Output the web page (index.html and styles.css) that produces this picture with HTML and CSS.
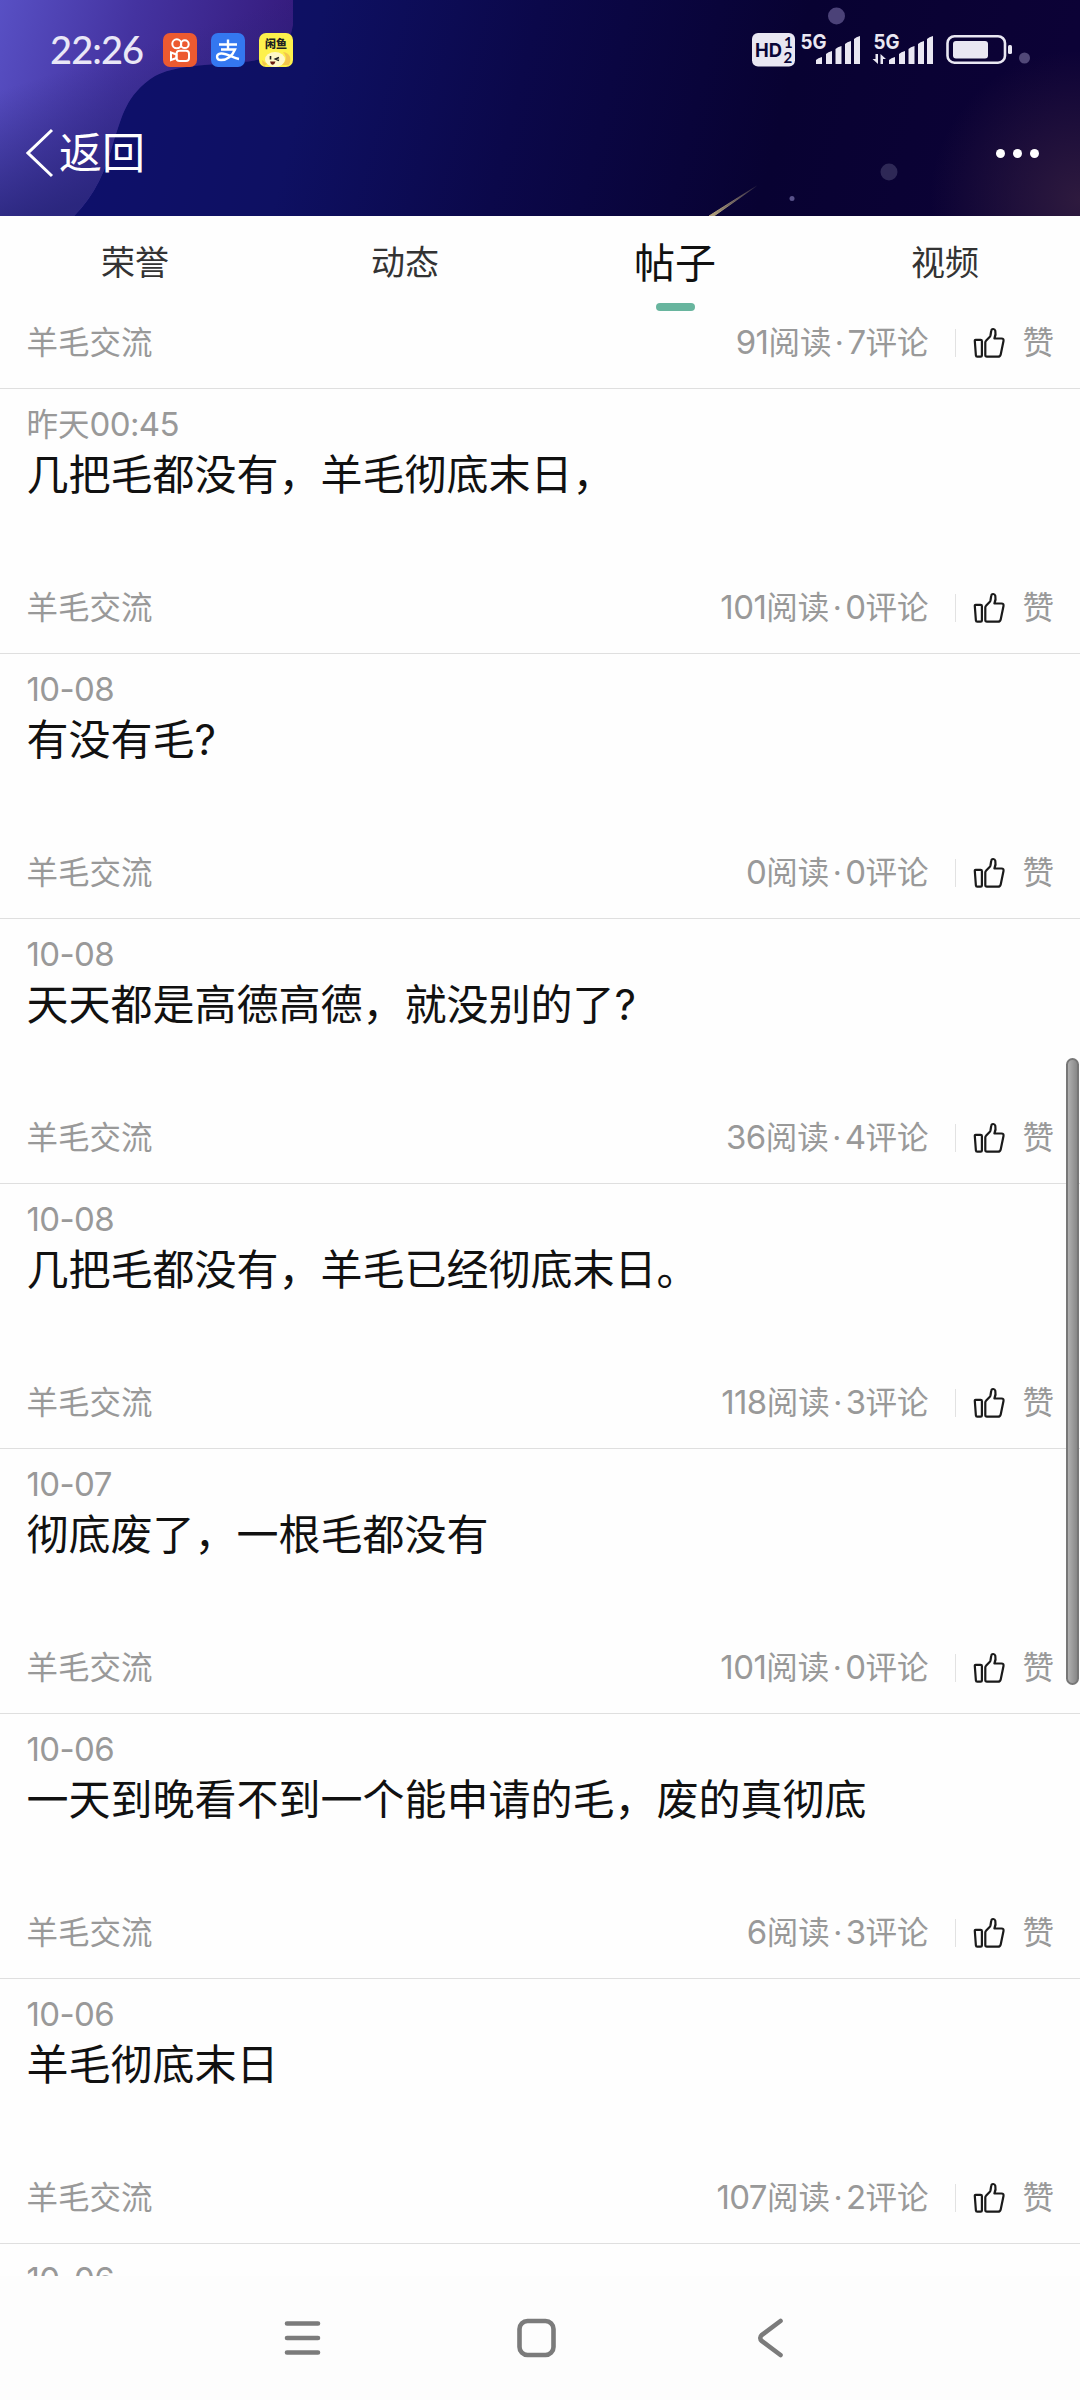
FILE: index.html
```html
<!DOCTYPE html>
<html lang="zh-CN">
<head>
<meta charset="utf-8">
<title>帖子</title>
<link rel="stylesheet" href="styles.css">
</head>
<body>
<svg class="defs" aria-hidden="true">
  <symbol id="thumb" viewBox="0 0 32 32">
    <path d="M2.200 12.800H7.600Q8.900 12.800 8.900 14V28.500Q8.900 29.700 7.700 29.700H4.200Q3 29.700 2.900 28.500L1.800 13.800Q1.700 12.800 2.700 12.800M12.300 28V15.500Q12.300 14.500 13 13.800L16.600 10Q17.300 9.200 17.500 8.200L18.200 4C18.500 1.500 21.600 1.300 22.300 3.800C22.900 6.300 22.500 9 21.400 11.500H28.500Q31 11.500 30.500 14L27.700 27.500Q27.200 29.700 25 29.700H14Q12.300 29.700 12.300 28Z"/>
  </symbol>
</svg>
<div class="screen">
  <header class="hero">
    <svg class="hero-art" viewBox="0 0 1080 216" preserveAspectRatio="none">
      <defs>
        <linearGradient id="night" x1="0" y1="0" x2="1" y2=".05">
          <stop offset="0" stop-color="#0e1070"/><stop offset=".3" stop-color="#0e1062"/>
          <stop offset=".5" stop-color="#0b084a"/><stop offset=".75" stop-color="#080232"/><stop offset="1" stop-color="#0c0236"/>
        </linearGradient>
        <linearGradient id="wave" x1="0" y1="0" x2="290" y2="70" gradientUnits="userSpaceOnUse">
          <stop offset="0" stop-color="#5850c4"/><stop offset=".45" stop-color="#4433a0"/><stop offset="1" stop-color="#351a7c"/>
        </linearGradient>
        <linearGradient id="waveShade" x1="0" y1="90" x2="40" y2="216" gradientUnits="userSpaceOnUse">
          <stop offset="0" stop-color="#28257a" stop-opacity="0"/><stop offset="1" stop-color="#28257a" stop-opacity=".9"/>
        </linearGradient>
        <radialGradient id="glow" cx="1080" cy="200" r="150" gradientUnits="userSpaceOnUse">
          <stop offset="0" stop-color="#2e1a3e"/><stop offset="1" stop-color="#2e1a3e" stop-opacity="0"/>
        </radialGradient>
        <linearGradient id="meteor" x1="710" y1="216" x2="758" y2="186" gradientUnits="userSpaceOnUse">
          <stop offset="0" stop-color="#b6a57e"/><stop offset="1" stop-color="#b6a57e" stop-opacity="0"/>
        </linearGradient>
      </defs>
      <rect width="1080" height="216" fill="url(#night)"/>
      <rect width="1080" height="216" fill="url(#glow)"/>
      <path d="M0 0H293V25Q288 60 240 62C195 66 175 66 155 76C125 95 122 118 114 140C106 170 95 195 74 216H0Z" fill="url(#wave)"/>
      <path d="M0 0H293V25Q288 60 240 62C195 66 175 66 155 76C125 95 122 118 114 140C106 170 95 195 74 216H0Z" fill="url(#waveShade)"/>
      <circle cx="836.500" cy="16" r="8.500" fill="#4b4278"/>
      <circle cx="889" cy="172" r="8.500" fill="#2e2856"/>
      <circle cx="1024.500" cy="58" r="5.500" fill="#514878"/>
      <circle cx="792" cy="198.500" r="2.500" fill="#59528a"/>
      <path d="M709 216L758 185L714 216Z" fill="url(#meteor)" stroke="url(#meteor)"/>
    </svg>
    <div class="status">
      <span class="clock">22:26</span>
      <svg class="app" viewBox="0 0 34 34"><rect width="34" height="34" rx="7" fill="#ec5a30"/><g fill="none" stroke="#fff" stroke-width="2"><circle cx="13.800" cy="10.800" r="4.500"/><circle cx="21.800" cy="11.200" r="3.900"/><rect x="13.500" y="17.800" width="12.500" height="10.200" rx="3"/><path d="M13.500 21.500L8 19.500v7.500l5.500-2z"/></g></svg>
      <svg class="app" viewBox="0 0 34 34"><rect width="34" height="34" rx="7" fill="#3477f0"/><path d="M8 11.500h18M17 6.500v10M10 16.500h14c-3 7-8 10.500-14 10.500-5 0-5.500-6 0-6.500 6-.5 12 4.500 18 5.500" fill="none" stroke="#fff" stroke-width="2.400"/></svg>
      <svg class="app" viewBox="0 0 34 34"><rect width="34" height="34" rx="7" fill="#fdf04c"/><ellipse cx="16" cy="26.500" rx="10" ry="7.500" fill="#fff8c8"/><path d="M24 19c7 1 9 6 6 13h-7c5-4 5-9 1-13zM3 27l5 4-3 2q-2-2-2-6" fill="#f3c64e"/><path d="M11.500 23v3.500M20 27.500l-3.500-1.500L20 24.500" stroke="#222" stroke-width="1.600" fill="none"/><path d="M11 28.500h5.500q-1 3.500-3 3.200T11 28.500" fill="#6a1a10"/><text class="fish" x="17" y="14.500" text-anchor="middle">闲鱼</text></svg>
      <svg class="signals" viewBox="0 0 262 34">
        <rect width="43" height="33.500" rx="6" fill="#e9e7f2"/>
        <text class="hd" x="3" y="24" textLength="27" lengthAdjust="spacingAndGlyphs">HD</text><text class="hd-n" x="32" y="15">1</text><text class="hd-n" x="31.500" y="29.500">2</text>
        <g fill="#e9e7f2">
          <text class="g5" x="48.500" y="15.500" textLength="26" lengthAdjust="spacingAndGlyphs">5G</text><text class="g5" x="121.500" y="15.500" textLength="26" lengthAdjust="spacingAndGlyphs">5G</text>
          <path id="bars" d="M64 31v-4q2-2 6-3v7zM74 31V21q2-2 6-3v13zM83.500 31V16q2-2 6-3v18zM93 31V11q2-2 6-3v23zM102 31V6q2-2 6-3v28z"/>
          <use href="#bars" x="73"/>
          <path d="M123.500 21h2.500v10l-5.500-5h3zM128.500 31V21l5.500 5h-3v5z"/>
          <rect x="201" y="8" width="35" height="17.500" rx="3"/><rect x="256" y="12" width="4" height="9" rx="1.500"/>
        </g>
        <rect x="195.500" y="3.200" width="57.500" height="26.500" rx="7" fill="none" stroke="#e9e7f2" stroke-width="2.600"/>
      </svg>
    </div>
    <div class="navbar">
      <div class="back"><svg viewBox="0 0 28 50"><path d="M26 2L2 25L26 48"/></svg><span>返回</span></div>
      <div class="more"><i></i><i></i><i></i></div>
    </div>
  </header>

  <nav class="tabs">
    <span class="tab">荣誉</span>
    <span class="tab">动态</span>
    <span class="tab active">帖子</span>
    <span class="tab">视频</span>
  </nav>

  <main class="list">
    <article class="post tail">
      <footer class="foot"><span class="board">羊毛交流</span><span class="stats"><b>91</b>阅读<em>·</em><b>7</b>评论</span><i class="bar"></i><svg class="thumb"><use href="#thumb"/></svg><span>赞</span></footer>
    </article>
    <article class="post">
      <div class="date">昨天<b>00:45</b></div>
      <h2 class="title">几把毛都没有，羊毛彻底末日，</h2>
      <footer class="foot"><span class="board">羊毛交流</span><span class="stats"><b>101</b>阅读<em>·</em><b>0</b>评论</span><i class="bar"></i><svg class="thumb"><use href="#thumb"/></svg><span>赞</span></footer>
    </article>
    <article class="post">
      <div class="date"><b>10-08</b></div>
      <h2 class="title">有没有毛?</h2>
      <footer class="foot"><span class="board">羊毛交流</span><span class="stats"><b>0</b>阅读<em>·</em><b>0</b>评论</span><i class="bar"></i><svg class="thumb"><use href="#thumb"/></svg><span>赞</span></footer>
    </article>
    <article class="post">
      <div class="date"><b>10-08</b></div>
      <h2 class="title">天天都是高德高德，就没别的了?</h2>
      <footer class="foot"><span class="board">羊毛交流</span><span class="stats"><b>36</b>阅读<em>·</em><b>4</b>评论</span><i class="bar"></i><svg class="thumb"><use href="#thumb"/></svg><span>赞</span></footer>
    </article>
    <article class="post">
      <div class="date"><b>10-08</b></div>
      <h2 class="title">几把毛都没有，羊毛已经彻底末日。</h2>
      <footer class="foot"><span class="board">羊毛交流</span><span class="stats"><b>118</b>阅读<em>·</em><b>3</b>评论</span><i class="bar"></i><svg class="thumb"><use href="#thumb"/></svg><span>赞</span></footer>
    </article>
    <article class="post">
      <div class="date"><b>10-07</b></div>
      <h2 class="title">彻底废了，一根毛都没有</h2>
      <footer class="foot"><span class="board">羊毛交流</span><span class="stats"><b>101</b>阅读<em>·</em><b>0</b>评论</span><i class="bar"></i><svg class="thumb"><use href="#thumb"/></svg><span>赞</span></footer>
    </article>
    <article class="post">
      <div class="date"><b>10-06</b></div>
      <h2 class="title">一天到晚看不到一个能申请的毛，废的真彻底</h2>
      <footer class="foot"><span class="board">羊毛交流</span><span class="stats"><b>6</b>阅读<em>·</em><b>3</b>评论</span><i class="bar"></i><svg class="thumb"><use href="#thumb"/></svg><span>赞</span></footer>
    </article>
    <article class="post">
      <div class="date"><b>10-06</b></div>
      <h2 class="title">羊毛彻底末日</h2>
      <footer class="foot"><span class="board">羊毛交流</span><span class="stats"><b>107</b>阅读<em>·</em><b>2</b>评论</span><i class="bar"></i><svg class="thumb"><use href="#thumb"/></svg><span>赞</span></footer>
    </article>
    <article class="post">
      <div class="date"><b>10-06</b></div>
    </article>
  </main>

  <div class="scrollbar"></div>

  <nav class="system">
    <svg viewBox="0 0 40 40"><path d="M4 5.500h31M4 20h31M4 34.500h31"/></svg>
    <svg viewBox="0 0 40 40"><rect x="3.500" y="3" width="34" height="34" rx="8"/></svg>
    <svg viewBox="0 0 40 40"><path d="M31.500 3L13 16.800Q9.500 20 13 23.200L31.500 37"/></svg>
  </nav>
</div>
</body>
</html>
```
FILE: styles.css
```css
* { box-sizing: border-box; }
body { margin: 0; background: #fefefe; color: #111; font-family: Inter, "Noto Sans CJK SC", sans-serif; }
b, em, i { font-style: normal; font-weight: 400; }
.defs { display: none; }

.screen { position: relative; display: flex; flex-direction: column; width: 1080px; height: 2400px; overflow: hidden; }

/* Header over the night-sky artwork */
.hero { position: relative; flex: none; height: 216px; color: #fff; }
.hero-art { position: absolute; inset: 0; width: 1080px; height: 216px; }
.status { position: relative; display: flex; align-items: flex-start; height: 90px; padding: 33px 66px 0 50px; }
.clock { width: 113px; font: 500 38px/32px Lato, sans-serif; letter-spacing: -.9px; color: #e9e7f6; }
.app { width: 34px; height: 34px; margin-right: 14px; }
.signals { width: 262px; height: 34px; margin-left: auto; overflow: visible; }
.fish { font: 900 11px "Noto Sans CJK SC", sans-serif; fill: #222; }
.hd { font: 700 19px Inter, sans-serif; fill: #0a0638; }
.hd-n { font: 700 15px Lato, sans-serif; fill: #0a0638; }
.g5 { font: 700 20px Inter, sans-serif; }
.navbar { position: relative; display: flex; align-items: center; justify-content: space-between; height: 126px; padding: 0 41px 0 26px; }
.back { display: flex; align-items: center; gap: 5px; font-size: 43px; line-height: 50px; }
.back svg { width: 28px; height: 50px; fill: none; stroke: #fff; stroke-width: 3; }
.more { display: flex; gap: 8px; }
.more i { width: 9px; height: 9px; border-radius: 50%; background: #fff; }

/* Tabs */
.tabs { display: grid; grid-template-columns: repeat(4, 1fr); flex: none; height: 95px; }
.tab { display: flex; flex-direction: column; align-items: center; height: 95px; font-size: 34px; line-height: 94px; color: #333; }
.active { font-size: 41px; color: #111; }
.active::after { content: ""; flex: none; width: 39px; height: 8px; margin-top: -7px; border-radius: 4px; background: #68b59e; }

/* Post list */
.list { flex: none; height: 1965px; overflow: hidden; }
.post { display: flex; flex-direction: column; height: 265px; padding: 16px 26px 25px 26.5px; border-bottom: 1px solid #dfdfdf; }
.tail { height: 78px; padding-top: 11px; }
.date, .foot { font-size: 31.5px; font-weight: 400; color: #999; }
.date { height: 38px; line-height: 38px; }
.date b, .stats b { font-size: 33px; letter-spacing: -.6px; }
.title { margin: 7px 0 0; font-size: 42px; font-weight: 400; line-height: 50px; white-space: nowrap; }
.foot { display: flex; align-items: center; height: 41px; margin-top: auto; line-height: 41px; white-space: nowrap; }
.board { margin-right: auto; }
.stats em { display: inline-block; width: 16px; text-align: center; }
.bar { width: 1px; height: 28px; margin: 0 17px 0 27px; background: #e2e2e2; }
.thumb { width: 32px; height: 32px; margin-right: 17px; fill: none; stroke: #1a1a1a; stroke-width: 2.2; stroke-linejoin: round; }

.scrollbar { position: absolute; top: 1058px; left: 1066px; width: 13px; height: 627px; border: 2px solid #777; border-radius: 7px; background: linear-gradient(90deg, #b0b0b0, #888); }

/* System navigation */
.system { display: grid; grid-template-columns: repeat(3, 233px); flex: 1; align-items: center; justify-items: center; padding-left: 186px; background: #fdfdfd; }
.system svg { width: 40px; height: 40px; fill: none; stroke: #7b7b7b; stroke-width: 4.6; stroke-linecap: round; stroke-linejoin: round; }
```
